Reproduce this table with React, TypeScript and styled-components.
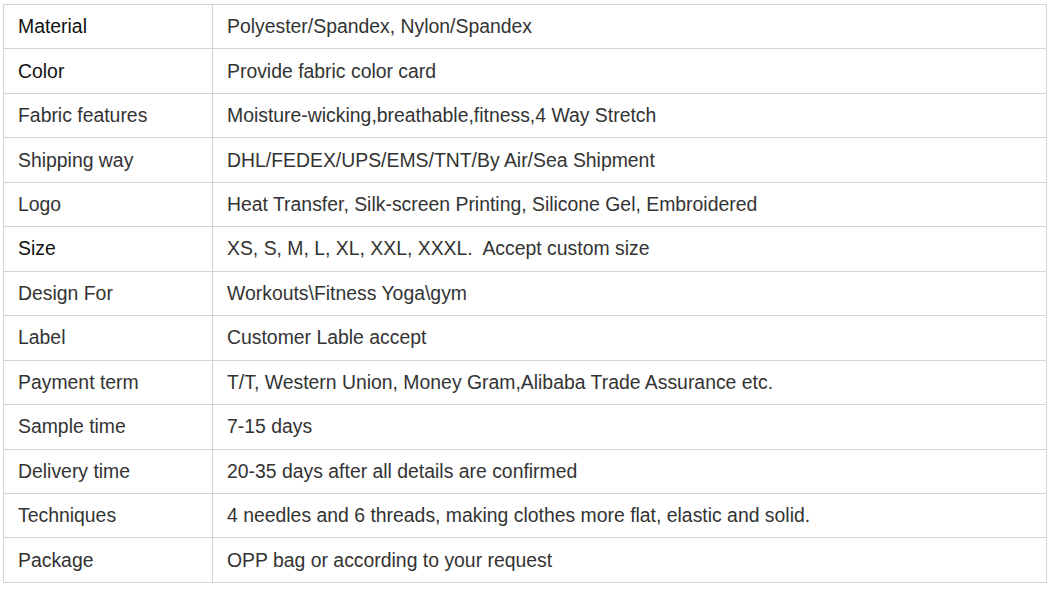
import React from "react";
import styled, { createGlobalStyle } from "styled-components";

const GlobalStyle = createGlobalStyle`
  html, body {
    margin: 0;
    padding: 0;
    background: #ffffff;
  }
  body {
    font-family: "Liberation Sans", Arial, sans-serif;
  }
`;

const Wrap = styled.div`
  padding: 4px 0 0 3px;
`;

const Table = styled.table`
  border-collapse: collapse;
  width: 1044px;
  table-layout: fixed;
  font-family: "Liberation Sans", Arial, sans-serif;
  font-size: 19.4px;
`;

const Row = styled.tr`
  height: 44.46px;
`;

const Cell = styled.td<{ $dark?: boolean; $first?: boolean }>`
  border: 1px solid #d4d4d4;
  padding: 0 0 0 14px;
  color: ${(p) => (p.$dark ? "#111111" : "#333333")};
  width: ${(p) => (p.$first ? "194px" : "auto")};
  vertical-align: middle;
  white-space: nowrap;
`;

const rows: { label: string; value: string; dark?: boolean }[] = [
  { label: "Material", value: "Polyester/Spandex, Nylon/Spandex", dark: true },
  { label: "Color", value: "Provide fabric color card", dark: true },
  { label: "Fabric features", value: "Moisture-wicking,breathable,fitness,4 Way Stretch" },
  { label: "Shipping way", value: "DHL/FEDEX/UPS/EMS/TNT/By Air/Sea Shipment" },
  { label: "Logo", value: "Heat Transfer, Silk-screen Printing, Silicone Gel, Embroidered" },
  { label: "Size", value: "XS, S, M, L, XL, XXL, XXXL.\u00a0 Accept custom size", dark: true },
  { label: "Design For", value: "Workouts\\Fitness Yoga\\gym" },
  { label: "Label", value: "Customer Lable accept" },
  { label: "Payment term", value: "T/T, Western Union, Money Gram,Alibaba Trade Assurance etc." },
  { label: "Sample time", value: "7-15 days" },
  { label: "Delivery time", value: "20-35 days after all details are confirmed" },
  { label: "Techniques", value: "4 needles and 6 threads, making clothes more flat, elastic and solid." },
  { label: "Package", value: "OPP bag or according to your request" },
];

function App() {
  return (
    <>
      <GlobalStyle />
      <Wrap>
        <Table>
          <tbody>
            {rows.map((r) => (
              <Row key={r.label}>
                <Cell $first $dark={r.dark}>
                  {r.label}
                </Cell>
                <Cell>{r.value}</Cell>
              </Row>
            ))}
          </tbody>
        </Table>
      </Wrap>
    </>
  );
}

export default App;
